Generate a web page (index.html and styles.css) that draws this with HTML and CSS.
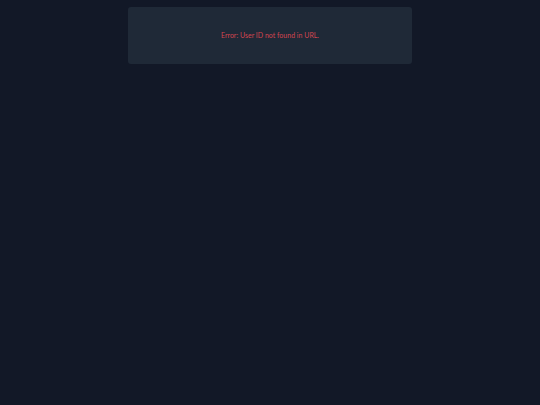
FILE: index.html
```html
<!DOCTYPE html>
<html>
<head>
<meta charset="utf-8">
<link rel="stylesheet" href="styles.css">
</head>
<body>
<main class="page">
  <div class="card">
    <p class="error">Error: User ID not found in URL.</p>
  </div>
</main>
</body>
</html>
```
FILE: styles.css
```css
html, body {
  margin: 0;
  padding: 0;
  background: #121827;
  height: 100%;
}
.page {
  display: flex;
  justify-content: center;
  padding-top: 7px;
}
.card {
  width: 284px;
  height: 57px;
  box-sizing: border-box;
  padding-bottom: 2px;
  background: #1f2937;
  border-radius: 3px;
  display: flex;
  align-items: center;
  justify-content: center;
}
.error {
  margin: 0;
  font-family: "Lato", "Noto Sans", sans-serif;
  font-size: 7px;
  color: #d44550;
}
```
